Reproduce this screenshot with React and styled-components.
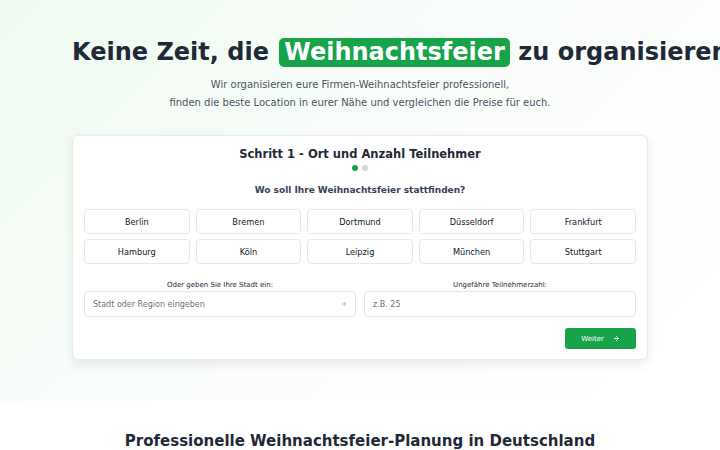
import styled, { createGlobalStyle } from 'styled-components';

const GlobalStyle = createGlobalStyle`
	body {
		margin: 0;
		font-family: 'DejaVu Sans', 'Liberation Sans', sans-serif;
		color: #1f2937;
		background: #ffffff;
		overflow: hidden;
	}
	* {
		box-sizing: border-box;
	}
`;

const CITIES = [
	'Berlin',
	'Bremen',
	'Dortmund',
	'Düsseldorf',
	'Frankfurt',
	'Hamburg',
	'Köln',
	'Leipzig',
	'München',
	'Stuttgart',
];

const Hero = styled.section`
	height: 401px;
	padding: 35px 72px 0;
	background: linear-gradient(135deg, #eefaf0 0%, #f6fcf7 35%, #fbfdfb 60%, #ffffff 100%);
`;

const Title = styled.h1`
	margin: 0;
	font-size: 24px;
	font-weight: 700;
	line-height: 34px;
	white-space: nowrap;
	color: #1f2937;
`;

const Highlight = styled.span`
	display: inline-block;
	margin: 0 0 0 2px;
	padding: 0 5px;
	background: #16a34a;
	color: #ffffff;
	border-radius: 5px;
	line-height: 29px;
`;

const Subtitle = styled.p`
	margin: 7px 0 0;
	font-size: 10px;
	line-height: 18px;
	text-align: center;
	color: #4b5563;
`;

const Card = styled.div`
	margin-top: 23px;
	padding: 9px 11px 10px;
	background: #ffffff;
	border: 1px solid #e8ece9;
	border-radius: 6px;
	box-shadow: 0 4px 12px rgba(0, 0, 0, 0.08);
`;

const CardTitle = styled.h2`
	margin: 0;
	font-size: 11.5px;
	font-weight: 700;
	line-height: 18px;
	text-align: center;
	color: #1f2937;
`;

const Dots = styled.div`
	display: flex;
	justify-content: center;
	gap: 4px;
	margin-top: 2px;
`;

const Dot = styled.span`
	width: 6px;
	height: 6px;
	border-radius: 50%;
	background: ${({ $active }) => ($active ? '#16a34a' : '#d1d5db')};
`;

const Question = styled.h3`
	margin: 12px 0 0;
	font-size: 9px;
	font-weight: 700;
	line-height: 14px;
	text-align: center;
	color: #374151;
`;

const CityGrid = styled.div`
	display: grid;
	grid-template-columns: repeat(5, 1fr);
	gap: 5px 6px;
	margin-top: 12px;
`;

const CityButton = styled.button`
	height: 25px;
	font-family: inherit;
	font-size: 8.2px;
	color: #111827;
	background: #ffffff;
	border: 1px solid #e5e7eb;
	border-radius: 4px;
	cursor: pointer;
`;

const Fields = styled.div`
	display: grid;
	grid-template-columns: 1fr 1fr;
	gap: 8px;
	margin-top: 16px;
`;

const Field = styled.div`
	display: flex;
	flex-direction: column;
	gap: 1px;
`;

const Label = styled.label`
	font-size: 7px;
	line-height: 10px;
	text-align: center;
	color: #1f2937;
`;

const InputWrap = styled.div`
	display: flex;
	align-items: center;
	height: 26px;
	padding: 0 8px;
	border: 1px solid #e5e7eb;
	border-radius: 4px;
	background: #ffffff;
`;

const Input = styled.input`
	flex: 1;
	min-width: 0;
	padding: 0;
	border: none;
	outline: none;
	background: transparent;
	font-family: inherit;
	font-size: 8px;
	color: #1f2937;

	&::placeholder {
		color: #6b7280;
	}
`;

const Actions = styled.div`
	display: flex;
	justify-content: flex-end;
	margin-top: 11px;
`;

const NextButton = styled.button`
	display: flex;
	align-items: center;
	justify-content: center;
	gap: 9px;
	width: 71px;
	height: 21px;
	font-family: inherit;
	font-size: 7px;
	color: #ffffff;
	background: #16a34a;
	border: none;
	border-radius: 3px;
	cursor: pointer;
`;

const Section = styled.section`
	padding-top: 30px;
`;

const SectionTitle = styled.h2`
	margin: 0;
	font-size: 15px;
	font-weight: 700;
	line-height: 20px;
	text-align: center;
	color: #1f2937;
`;

const Arrow = ({ size = 8, color = 'currentColor' }) => (
	<svg width={size} height={size} viewBox="0 0 24 24" fill="none" stroke={color} strokeWidth="3" strokeLinecap="round" strokeLinejoin="round">
		<path d="M5 12h14" />
		<path d="m12 5 7 7-7 7" />
	</svg>
);

export default function App() {
	return (
		<>
			<GlobalStyle />
			<Hero>
				<Title>
					Keine Zeit, die <Highlight>Weihnachtsfeier</Highlight> zu organisieren
				</Title>
				<Subtitle>
					Wir organisieren eure Firmen-Weihnachtsfeier professionell,
					<br />
					finden die beste Location in eurer Nähe und vergleichen die Preise für euch.
				</Subtitle>
				<Card>
					<CardTitle>Schritt 1 - Ort und Anzahl Teilnehmer</CardTitle>
					<Dots>
						<Dot $active />
						<Dot />
					</Dots>
					<Question>Wo soll Ihre Weihnachtsfeier stattfinden?</Question>
					<CityGrid>
						{CITIES.map((city) => (
							<CityButton key={city}>{city}</CityButton>
						))}
					</CityGrid>
					<Fields>
						<Field>
							<Label>Oder geben Sie Ihre Stadt ein:</Label>
							<InputWrap>
								<Input placeholder="Stadt oder Region eingeben" />
								<Arrow size={6} color="#9ca3af" />
							</InputWrap>
						</Field>
						<Field>
							<Label>Ungefähre Teilnehmerzahl:</Label>
							<InputWrap>
								<Input placeholder="z.B. 25" />
							</InputWrap>
						</Field>
					</Fields>
					<Actions>
						<NextButton>
							Weiter <Arrow size={7} />
						</NextButton>
					</Actions>
				</Card>
			</Hero>
			<Section>
				<SectionTitle>Professionelle Weihnachtsfeier-Planung in Deutschland</SectionTitle>
			</Section>
		</>
	);
}
